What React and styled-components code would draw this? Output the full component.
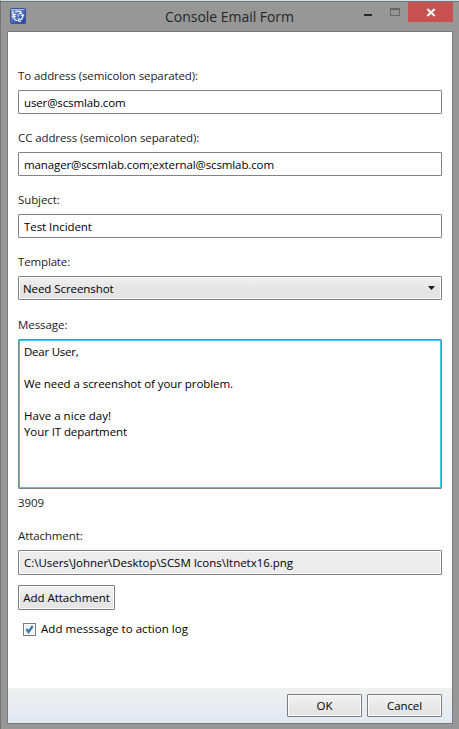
import React from 'react';
import styled, { createGlobalStyle } from 'styled-components';

const GlobalStyle = createGlobalStyle`
  * { box-sizing: border-box; }
  html, body { margin: 0; padding: 0; overflow: hidden; }
  body { font: 11.5px/16px "Open Sans", "Noto Sans", sans-serif; color: #000; }
`;

const Frame = styled.div`
  width: 459px;
  height: 729px;
  display: flex;
  flex-direction: column;
  background: #979797;
  border-top: 1px solid #d3dde6;
  border-left: 1px solid #757575;
`;

const TitleBar = styled.header`
  height: 30px;
  flex: none;
  display: grid;
  grid-template-columns: 155px 1fr 45px 45px;
  padding: 0 6px 0 9px;
  border-top: 1px solid #70787a;
`;

const AppIcon = styled.svg`
  width: 16px;
  height: 16px;
  margin-top: 6px;
`;

const Title = styled.h1`
  margin: 5px 0 0;
  font-size: 14px;
  font-weight: 400;
  line-height: 20px;
  letter-spacing: -0.03px;
  color: #262626;
  white-space: nowrap;
`;

const Controls = styled.div`
  display: flex;
  height: 20px;
`;

const MinMax = styled.svg`
  width: 45px;
  height: 20px;
  flex: none;
`;

const CloseButton = styled.div`
  height: 20px;
  background: #c75050;
  display: flex;
`;

const Client = styled.main`
  width: 446px;
  height: 693px;
  margin-left: 6px;
  flex: none;
  display: flex;
  flex-direction: column;
  background: #fff;
  border: 1px solid #7a7a7a;
`;

const Form = styled.div`
  flex: 1;
  padding: 36px 10px 0;
  display: flex;
  flex-direction: column;
  align-items: stretch;
`;

const Text = styled.span`
  letter-spacing: ${(p) => p.$ls || 0}px;
  white-space: pre;
`;

const Label = styled.label`
  height: 16px;
  margin-bottom: 6px;
  color: #1c1c1c;
`;

const Input = styled.div`
  height: 24px;
  display: flex;
  align-items: center;
  padding: 2px 5px 0;
  margin-bottom: 16px;
  border: 1px solid #808285;
  border-radius: 1px;
  background: #fff;
`;

const ReadOnly = styled(Input)`
  height: 25px;
  margin-bottom: 10px;
  padding-top: 1px;
  background: #ececec;
  box-shadow: inset 0 0 0 1px #fff;
`;

const Select = styled(Input)`
  justify-content: space-between;
  padding-left: 4px;
  margin-bottom: 17px;
  background: linear-gradient(#f1f1f1, #e5e5e5 50%, #e3e3e3);
  box-shadow: inset 0 0 0 1px #fcfcfc;
`;

const Arrow = styled.svg`
  width: 7px;
  height: 4px;
  margin: -3px 1px 0 0;
`;

const Message = styled.div`
  height: 150px;
  display: flex;
  flex-direction: column;
  padding: 4px 4px;
  border: 1px solid #808285;
  border-radius: 1px;
  box-shadow: inset 0 0 0 1px #34cdf9;
`;

const Line = styled(Text)`
  height: 16px;
  flex: none;
  padding-left: 1px;
`;

const Counter = styled.div`
  margin: 6px 0 17px;
  height: 16px;
  color: #1c1c1c;
`;

const Button = styled.button`
  width: ${(p) => p.$w}px;
  height: ${(p) => p.$h}px;
  flex: none;
  padding: 1px 0 0;
  font: inherit;
  color: #000;
  border: 1px solid #7c7c7c;
  border-radius: 1px;
  background: linear-gradient(#f3f3f3, #e8e8e8 50%, #e3e3e3);
  box-shadow: inset 0 0 0 1px #fcfcfc;
`;

const CheckRow = styled.div`
  display: flex;
  align-items: center;
  gap: 5px;
  height: 16px;
  margin: 11px 0 0 5px;
`;

const CheckBox = styled.svg`
  width: 13px;
  height: 13px;
`;

const Footer = styled.footer`
  height: 35px;
  flex: none;
  display: flex;
  justify-content: flex-end;
  gap: 5px;
  padding: 6px 10px 0 0;
  background: linear-gradient(#f0f0f0, #e2e8f3);
`;

const fields = [
  ['To address (semicolon separated):', -0.104, 'user@scsmlab.com', -0.127],
  ['CC address (semicolon separated):', -0.105, 'manager@scsmlab.com;external@scsmlab.com', -0.119],
  ['Subject:', -0.1, 'Test Incident', -0.06],
];

const lines = [
  ['Dear User,', -0.24],
  [' ', 0],
  ['We need a screenshot of your problem.', -0.07],
  [' ', 0],
  ['Have a nice day!', 0.027],
  ['Your IT department', -0.089],
];

export default function App() {
  return (
    <>
      <GlobalStyle />
      <Frame>
        <TitleBar>
          <AppIcon viewBox="0 0 16 16">
            <defs>
              <linearGradient id="badge" x1="0" y1="0" x2="1" y2="1">
                <stop offset="0" stopColor="#91a9dc" />
                <stop offset=".5" stopColor="#4b69b5" />
                <stop offset="1" stopColor="#283e96" />
              </linearGradient>
            </defs>
            <rect x=".5" y=".5" width="15" height="15" rx="1" fill="url(#badge)" stroke="#3953a0" />
            <path d="M1.5 1.5h13" stroke="#a9c2e9" />
            <g fill="none" stroke="#f2f5ff" strokeWidth="1.2">
              <path d="M5.5 3.6c2.2-1 4.2-.5 5.6 1.1M12.7 7c.3 2.4-.8 4.2-2.6 5.2M7.6 12.7C5.2 12.3 3.7 10.5 3.6 8" />
              <path d="M3 3.2v3.3h3.2M10.3 2.8l1 2.4-2.6.6M11 7.8l1.8-1.5 1.2 2M9.7 10.2l-1.5 2.2 2.6 1.2M2.2 9.4l1.4-2 2 1.6" />
            </g>
            <path d="M7 7h2v1H8v1.2M8 10v1" fill="none" stroke="#a9bdec" />
          </AppIcon>
          <Title>Console Email Form</Title>
          <Controls>
            <MinMax viewBox="0 0 45 20" shapeRendering="crispEdges">
              <path d="M1 12h8v2H1z" fill="#262626" />
              <path d="M27 6h10v8H27zM28 8v5h8V8z" fill="#666" fillRule="evenodd" />
            </MinMax>
          </Controls>
          <CloseButton>
            <MinMax viewBox="0 0 45 20">
              <path d="M19.3 7.1l7.4 6.8M26.7 7.1l-7.4 6.8" stroke="#fff" strokeWidth="2" />
            </MinMax>
          </CloseButton>
        </TitleBar>
        <Client>
          <Form>
            {fields.map(([label, ls, value, vls]) => (
              <React.Fragment key={label}>
                <Label><Text $ls={ls}>{label}</Text></Label>
                <Input><Text $ls={vls}>{value}</Text></Input>
              </React.Fragment>
            ))}
            <Label><Text $ls={-0.149}>Template:</Text></Label>
            <Select>
              <Text $ls={-0.075}>Need Screenshot</Text>
              <Arrow viewBox="0 0 7 4"><path d="M0 0h7L3.5 4z" fill="#1a1a1a" /></Arrow>
            </Select>
            <Label><Text $ls={-0.06}>Message:</Text></Label>
            <Message>
              {lines.map(([t, ls], i) => <Line key={i} $ls={ls}>{t}</Line>)}
            </Message>
            <Counter><Text $ls={-0.075}>3909</Text></Counter>
            <Label><Text $ls={-0.1}>Attachment:</Text></Label>
            <ReadOnly><Text $ls={-0.028}>{'C:\\Users\\Johner\\Desktop\\SCSM Icons\\Itnetx16.png'}</Text></ReadOnly>
            <Button $w={97} $h={25}><Text $ls={-0.036}>Add Attachment</Text></Button>
            <CheckRow>
              <CheckBox viewBox="0 0 13 13">
                <rect x=".5" y=".5" width="12" height="12" fill="#fff" stroke="#7c7c7c" />
                <rect x="2" y="2" width="9" height="9" fill="#f4f4f4" />
                <path d="M3.4 6l2.1 3L9.7 3" fill="none" stroke="#3079b5" strokeWidth="2.2" />
              </CheckBox>
              <Text $ls={0.043}>Add messsage to action log</Text>
            </CheckRow>
          </Form>
          <Footer>
            <Button $w={75} $h={23}><Text>OK</Text></Button>
            <Button $w={75} $h={23}><Text $ls={-0.093}>Cancel</Text></Button>
          </Footer>
        </Client>
      </Frame>
    </>
  );
}
